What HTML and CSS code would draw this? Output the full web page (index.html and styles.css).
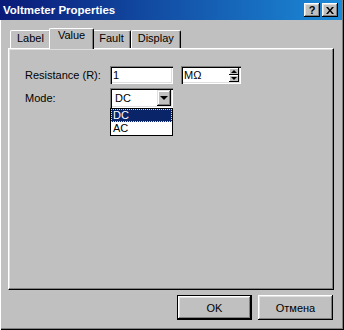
FILE: index.html
```html
<!DOCTYPE html>
<html lang="en">
<head>
  <meta charset="UTF-8">
  <title>Voltmeter Properties</title>
  <link rel="stylesheet" href="styles.css">
</head>
<body>
  <div class="window">
    <div class="titlebar">
      <span class="title">Voltmeter Properties</span>
      <div class="caption-buttons">
        <span class="cap-btn help">?</span>
        <span class="cap-btn">
          <svg width="8" height="7" viewBox="0 0 8 7">
            <path d="M0 0h2l2 2.5L6 0h2L5 3.5 8 7H6L4 4.5 2 7H0l3-3.5z" fill="#000"/>
          </svg>
        </span>
      </div>
    </div>

    <div class="content">
      <div class="tabs">
        <div class="tab">Label</div>
        <div class="tab active">Value</div>
        <div class="tab">Fault</div>
        <div class="tab">Display</div>
      </div>

      <div class="panel">
        <div class="row">
          <span class="field-label">Resistance (R):</span>
          <div class="textbox">1</div>
          <div class="textbox unit">
            <span>MΩ</span>
            <div class="spinner">
              <span class="spin-btn"><i class="arrow up"></i></span>
              <span class="spin-btn"><i class="arrow down"></i></span>
            </div>
          </div>
        </div>
        <div class="row">
          <span class="field-label">Mode:</span>
          <div class="combo">
            <span class="combo-value">DC</span>
            <span class="drop-btn"><i class="arrow down"></i></span>
            <ul class="droplist">
              <li class="selected">DC</li>
              <li>AC</li>
            </ul>
          </div>
        </div>
      </div>

      <div class="buttons">
        <button class="btn default">OK</button>
        <button class="btn">Отмена</button>
      </div>
    </div>
  </div>
</body>
</html>
```

FILE: styles.css
```css
body {
  margin: 0;
  background: #c0c0c0;
  font-family: "Liberation Sans", Arial, sans-serif;
  font-size: 11px;
  color: #000;
}

.window {
  width: 344px;
  height: 330px;
  box-sizing: border-box;
  background: #c0c0c0;
  box-shadow: inset 1px 0 #fff, inset -1px -1px #000, inset -2px -2px #808080;
  display: flex;
  flex-direction: column;
}

/* title bar */
.titlebar {
  height: 20px;
  margin-right: 2px;
  background: linear-gradient(to right, #0a1a78, #1c8ad8);
  display: flex;
  align-items: center;
  justify-content: space-between;
}

.title {
  color: #fff;
  font-weight: bold;
  font-size: 11.5px;
  padding-left: 3px;
}

.caption-buttons {
  display: flex;
  gap: 2px;
  padding-right: 4px;
}

.cap-btn {
  width: 16px;
  height: 14px;
  box-sizing: border-box;
  background: #c0c0c0;
  box-shadow: inset -1px -1px #000, inset 1px 1px #fff, inset -2px -2px #808080, inset 2px 2px #dfdfdf;
  display: flex;
  align-items: center;
  justify-content: center;
}

.cap-btn.help {
  font-weight: bold;
  font-size: 11px;
  line-height: 14px;
}

/* tabs */
.content {
  flex: 1;
  display: flex;
  flex-direction: column;
  padding: 8px 10px 0 8px;
}

.tabs {
  display: flex;
  align-items: flex-end;
  height: 20px;
  padding-left: 2px;
}

.tab {
  height: 18px;
  box-sizing: border-box;
  padding: 0 6px;
  border: 1px solid;
  border-color: #fff #000 transparent #fff;
  border-bottom: none;
  border-radius: 2px 2px 0 0;
  box-shadow: inset -1px 0 #808080;
  line-height: 15px;
  background: #c0c0c0;
}

.tab.active {
  position: relative;
  z-index: 1;
  height: 21px;
  margin: 0 -2px -1px;
  padding: 0 8px;
  line-height: 13px;
}

.panel {
  height: 242px;
  box-sizing: border-box;
  border: 1px solid;
  border-color: #fff #000 #000 #fff;
  box-shadow: inset -1px -1px #808080, inset 1px 1px #dfdfdf;
  padding: 17px 16px;
}

.row {
  display: flex;
  align-items: center;
  margin-bottom: 4px;
}

.field-label {
  width: 85px;
}

.textbox {
  width: 63px;
  height: 18px;
  box-sizing: border-box;
  padding: 0 3px;
  background: #fff;
  box-shadow: inset 1px 1px #808080, inset 2px 2px #000, inset -1px -1px #fff, inset -2px -2px #dfdfdf;
  display: flex;
  align-items: center;
}

.textbox.unit {
  width: 60px;
  margin-left: 8px;
  padding-right: 2px;
  justify-content: space-between;
}

.spinner {
  display: flex;
  flex-direction: column;
}

.spin-btn {
  width: 10px;
  height: 7px;
  box-sizing: border-box;
  background: #c0c0c0;
  box-shadow: inset -1px -1px #000, inset 1px 1px #fff;
  display: flex;
  align-items: center;
  justify-content: center;
}

.arrow {
  width: 0;
  height: 0;
  border-left: 3px solid transparent;
  border-right: 3px solid transparent;
}

.arrow.up {
  border-bottom: 3px solid #000;
}

.arrow.down {
  border-top: 3px solid #000;
}

/* combo box */
.combo {
  position: relative;
  width: 63px;
  height: 20px;
  box-sizing: border-box;
  padding: 2px 2px 2px 5px;
  background: #fff;
  box-shadow: inset 1px 1px #808080, inset 2px 2px #000, inset -1px -1px #fff, inset -2px -2px #dfdfdf;
  display: flex;
  align-items: center;
  justify-content: space-between;
}

.drop-btn {
  width: 14px;
  height: 16px;
  box-sizing: border-box;
  background: #c0c0c0;
  box-shadow: inset -1px -1px #000, inset 1px 1px #dfdfdf, inset -2px -2px #808080, inset 2px 2px #fff;
  display: flex;
  align-items: center;
  justify-content: center;
}

.drop-btn .arrow {
  border-left-width: 4px;
  border-right-width: 4px;
  border-top-width: 4px;
}

.droplist {
  position: absolute;
  top: 20px;
  left: 0;
  width: 63px;
  box-sizing: border-box;
  margin: 0;
  padding: 0;
  list-style: none;
  background: #fff;
  border: 1px solid #000;
}

.droplist li {
  height: 13px;
  line-height: 13px;
  padding-left: 2px;
}

.droplist li.selected {
  background: #0a246a;
  color: #fff;
  outline: 1px dotted #f0e070;
  outline-offset: -1px;
}

/* dialog buttons */
.buttons {
  display: flex;
  justify-content: flex-end;
  gap: 6px;
  margin-top: 5px;
  padding-right: 1px;
}

.btn {
  width: 75px;
  height: 25px;
  border: none;
  background: #c0c0c0;
  font-family: inherit;
  font-size: 11px;
  color: #000;
  box-shadow: inset -1px -1px #000, inset 1px 1px #fff, inset -2px -2px #808080, inset 2px 2px #dfdfdf;
}

.btn.default {
  box-shadow: inset 0 0 0 1px #000, inset -2px -2px #000, inset 2px 2px #fff, inset -3px -3px #808080, inset 3px 3px #dfdfdf;
}
```
